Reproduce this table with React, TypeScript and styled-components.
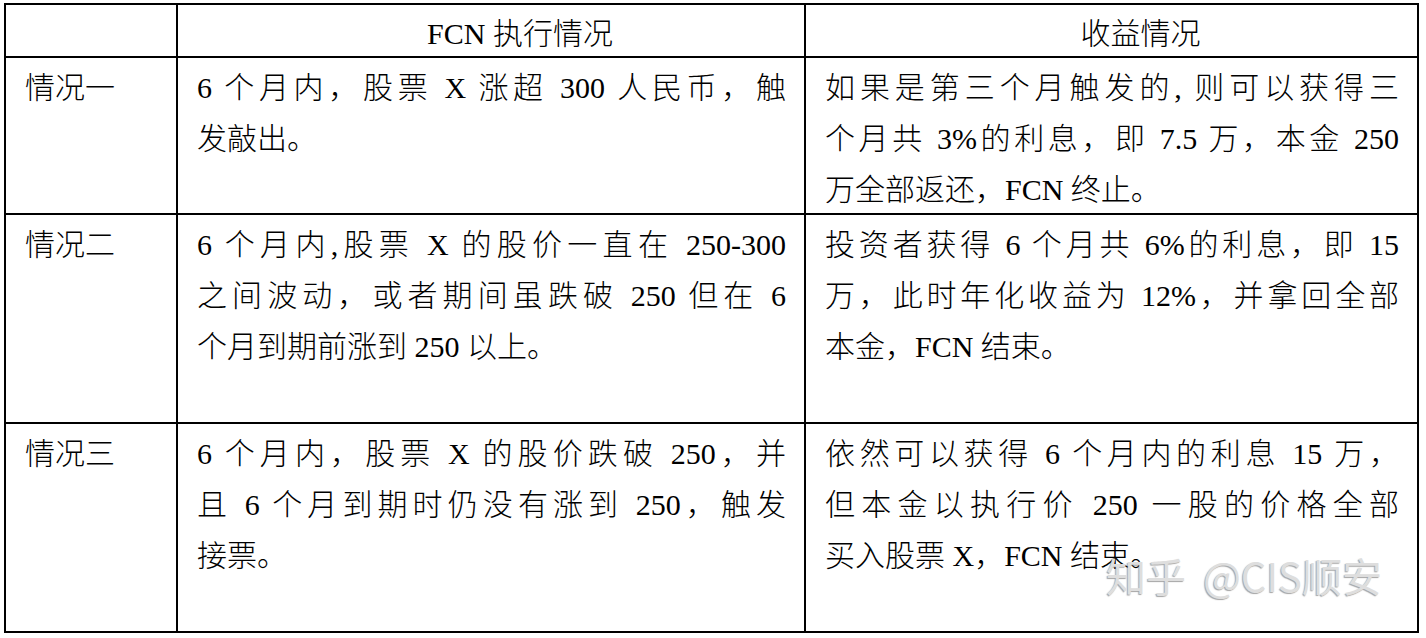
import React from 'react'
import styled, { createGlobalStyle } from 'styled-components'

const GlobalStyle = createGlobalStyle`
  html, body {
    margin: 0;
    padding: 0;
    background: #fff;
  }

  body {
    font-family: 'Liberation Serif', 'Noto Sans CJK SC', serif;
    color: #000;
  }
`

const Page = styled.div`
  position: relative;
  width: 1415px;
  margin: 3px 0 0 4px;
`

const Table = styled.div`
  display: grid;
  grid-template-columns: 170px 626px 611px;
  grid-template-rows: 51px 155px 207px 207px;
  gap: 2px;
  padding: 2px;
  background: #000;
`

const HeadCell = styled.div`
  display: flex;
  align-items: center;
  justify-content: center;
  padding-left: 58px;
  background: #fff;
  font-size: 30px;
  font-weight: 300;
  white-space: nowrap;
`

const BodyCell = styled.div`
  padding: 4px 18px 0 19px;
  background: #fff;
  font-size: 30px;
  font-weight: 300;
  line-height: 51px;
`

const Line = styled.div<{ $fill?: boolean }>`
  white-space: nowrap;
  text-align: ${({ $fill }) => ($fill ? 'justify' : 'left')};
  text-align-last: ${({ $fill }) => ($fill ? 'justify' : 'auto')};
`

const Watermark = styled.div`
  position: absolute;
  left: 1102px;
  top: 552px;
  font-family: 'Noto Sans CJK SC', sans-serif;
  font-size: 40px;
  line-height: 1;
  color: #dedede;
  text-shadow: -1px 1px 1px rgba(90, 90, 90, 0.55);
  word-spacing: 8px;
  white-space: nowrap;
  pointer-events: none;
`

interface Row {
  label: string
  plan: string[]
  result: string[]
}

const rows: Row[] = [
  {
    label: '情况一',
    plan: ['6 个月内，股票 X 涨超 300 人民币，触', '发敲出。'],
    result: [
      '如果是第三个月触发的, 则可以获得三',
      '个月共 3%的利息，即 7.5 万，本金 250',
      '万全部返还，FCN 终止。',
    ],
  },
  {
    label: '情况二',
    plan: [
      '6 个月内,股票 X 的股价一直在 250-300',
      '之间波动，或者期间虽跌破 250 但在 6',
      '个月到期前涨到 250 以上。',
    ],
    result: [
      '投资者获得 6 个月共 6%的利息，即 15',
      '万，此时年化收益为 12%，并拿回全部',
      '本金，FCN 结束。',
    ],
  },
  {
    label: '情况三',
    plan: [
      '6 个月内，股票 X 的股价跌破 250，并',
      '且 6 个月到期时仍没有涨到 250，触发',
      '接票。',
    ],
    result: [
      '依然可以获得 6 个月内的利息 15 万，',
      '但本金以执行价 250 一股的价格全部',
      '买入股票 X，FCN 结束。',
    ],
  },
]

const Lines = ({ lines }: { lines: string[] }) => (
  <>
    {lines.map((text, i) => (
      <Line key={i} $fill={i < lines.length - 1}>
        {text}
      </Line>
    ))}
  </>
)

export default function App() {
  return (
    <>
      <GlobalStyle />
      <Page>
        <Table>
          <HeadCell />
          <HeadCell>FCN 执行情况</HeadCell>
          <HeadCell>收益情况</HeadCell>
          {rows.map((row) => (
            <React.Fragment key={row.label}>
              <BodyCell>
                <Line>{row.label}</Line>
              </BodyCell>
              <BodyCell>
                <Lines lines={row.plan} />
              </BodyCell>
              <BodyCell>
                <Lines lines={row.result} />
              </BodyCell>
            </React.Fragment>
          ))}
        </Table>
        <Watermark>知乎 @CIS顺安</Watermark>
      </Page>
    </>
  )
}
